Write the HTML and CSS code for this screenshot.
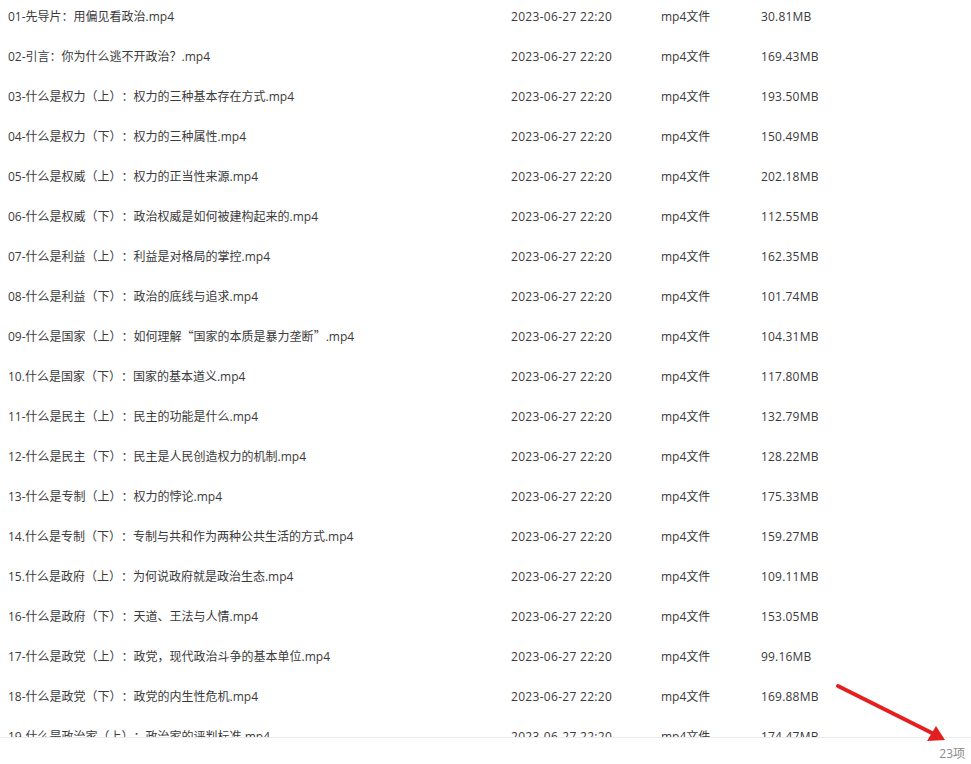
FILE: index.html
```html
<!DOCTYPE html>
<html lang="zh">

<head>
    <meta charset="UTF-8">
    <title>文件列表</title>
    <link rel="stylesheet" href="styles.css">
</head>

<body>
    <div id="container">
        <div id="list-box">
            <div id="list">
                <div class="row"><span class="name">01-先导片：用偏见看政治.mp4</span><span class="date">2023-06-27 22:20</span><span class="type">mp4文件</span><span class="size">30.81MB</span></div>
                <div class="row"><span class="name">02-引言：你为什么逃不开政治？.mp4</span><span class="date">2023-06-27 22:20</span><span class="type">mp4文件</span><span class="size">169.43MB</span></div>
                <div class="row"><span class="name">03-什么是权力（上）：权力的三种基本存在方式.mp4</span><span class="date">2023-06-27 22:20</span><span class="type">mp4文件</span><span class="size">193.50MB</span></div>
                <div class="row"><span class="name">04-什么是权力（下）：权力的三种属性.mp4</span><span class="date">2023-06-27 22:20</span><span class="type">mp4文件</span><span class="size">150.49MB</span></div>
                <div class="row"><span class="name">05-什么是权威（上）：权力的正当性来源.mp4</span><span class="date">2023-06-27 22:20</span><span class="type">mp4文件</span><span class="size">202.18MB</span></div>
                <div class="row"><span class="name">06-什么是权威（下）：政治权威是如何被建构起来的.mp4</span><span class="date">2023-06-27 22:20</span><span class="type">mp4文件</span><span class="size">112.55MB</span></div>
                <div class="row"><span class="name">07-什么是利益（上）：利益是对格局的掌控.mp4</span><span class="date">2023-06-27 22:20</span><span class="type">mp4文件</span><span class="size">162.35MB</span></div>
                <div class="row"><span class="name">08-什么是利益（下）：政治的底线与追求.mp4</span><span class="date">2023-06-27 22:20</span><span class="type">mp4文件</span><span class="size">101.74MB</span></div>
                <div class="row"><span class="name">09-什么是国家（上）：如何理解<span class="cjk">“</span>国家的本质是暴力垄断<span class="cjk">”</span>.mp4</span><span class="date">2023-06-27 22:20</span><span class="type">mp4文件</span><span class="size">104.31MB</span></div>
                <div class="row"><span class="name">10.什么是国家（下）：国家的基本道义.mp4</span><span class="date">2023-06-27 22:20</span><span class="type">mp4文件</span><span class="size">117.80MB</span></div>
                <div class="row"><span class="name">11-什么是民主（上）：民主的功能是什么.mp4</span><span class="date">2023-06-27 22:20</span><span class="type">mp4文件</span><span class="size">132.79MB</span></div>
                <div class="row"><span class="name">12-什么是民主（下）：民主是人民创造权力的机制.mp4</span><span class="date">2023-06-27 22:20</span><span class="type">mp4文件</span><span class="size">128.22MB</span></div>
                <div class="row"><span class="name">13-什么是专制（上）：权力的悖论.mp4</span><span class="date">2023-06-27 22:20</span><span class="type">mp4文件</span><span class="size">175.33MB</span></div>
                <div class="row"><span class="name">14.什么是专制（下）：专制与共和作为两种公共生活的方式.mp4</span><span class="date">2023-06-27 22:20</span><span class="type">mp4文件</span><span class="size">159.27MB</span></div>
                <div class="row"><span class="name">15.什么是政府（上）：为何说政府就是政治生态.mp4</span><span class="date">2023-06-27 22:20</span><span class="type">mp4文件</span><span class="size">109.11MB</span></div>
                <div class="row"><span class="name">16-什么是政府（下）：天道、王法与人情.mp4</span><span class="date">2023-06-27 22:20</span><span class="type">mp4文件</span><span class="size">153.05MB</span></div>
                <div class="row"><span class="name">17-什么是政党（上）：政党，现代政治斗争的基本单位.mp4</span><span class="date">2023-06-27 22:20</span><span class="type">mp4文件</span><span class="size">99.16MB</span></div>
                <div class="row"><span class="name">18-什么是政党（下）：政党的内生性危机.mp4</span><span class="date">2023-06-27 22:20</span><span class="type">mp4文件</span><span class="size">169.88MB</span></div>
                <div class="row"><span class="name">19-什么是政治家（上）：政治家的评判标准.mp4</span><span class="date">2023-06-27 22:20</span><span class="type">mp4文件</span><span class="size">174.47MB</span></div>
            </div>
        </div>
        <div id="footer">23项</div>

        <!-- red arrow pointing to the item count -->
        <svg class="arrow" width="971" height="764" viewBox="0 0 971 764">
            <line x1="838" y1="686" x2="934" y2="734" stroke="#e3201f" stroke-width="4" stroke-linecap="round" />
            <polygon points="945,740 927,741 936,726" fill="#e3201f" />
        </svg>
    </div>
</body>

</html>
```

FILE: styles.css
```css
* {
    margin: 0;
    padding: 0;
    box-sizing: border-box;
}

body {
    background-color: #fff;
    font-family: "Open Sans", "Noto Sans CJK SC", sans-serif;
    font-size: 12px;
    color: #3a3a3a;
    text-spacing-trim: space-all;
}

#container {
    position: relative;
    width: 971px;
    height: 764px;
    overflow: hidden;
}

#list-box {
    height: 737px;
    overflow: hidden;
}

/* list is scrolled a few pixels */
#list {
    margin-top: -4px;
}

.row {
    display: flex;
    align-items: center;
    height: 40px;
}

.name {
    width: 511px;
    padding-left: 8px;
    white-space: nowrap;
}

/* full width quotes */
.cjk {
    font-family: "Noto Sans CJK SC", sans-serif;
}

.date {
    width: 150px;
    letter-spacing: 0.3px;
}

.type {
    width: 100px;
}

.size {
    width: 100px;
    letter-spacing: 0.2px;
}

#footer {
    height: 27px;
    border-top: 1px solid #ececec;
    text-align: right;
    padding: 6px 6px 0 0;
    color: #8a8a8a;
}

.arrow {
    position: absolute;
    left: 0;
    top: 0;
    pointer-events: none;
}
```
